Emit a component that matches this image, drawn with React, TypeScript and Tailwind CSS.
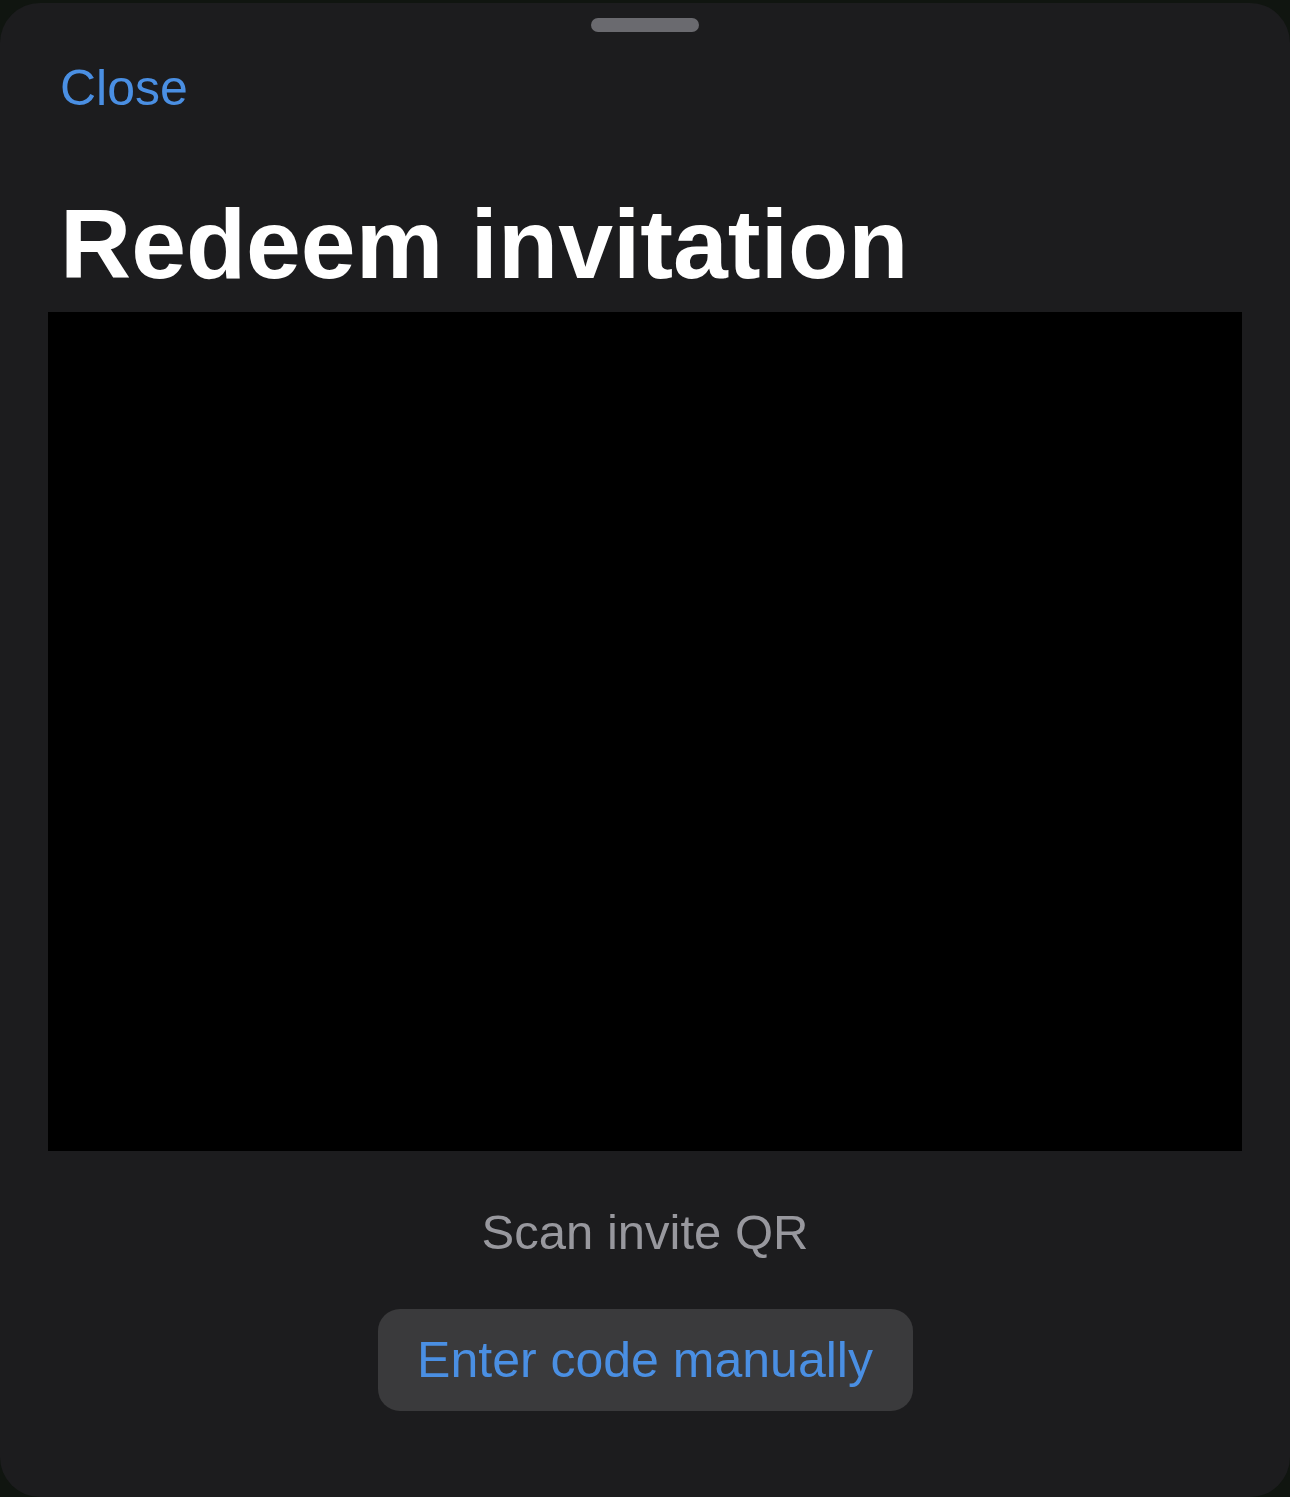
export default function App() {
  return (
    <div className="w-[1290px] h-[1497px] bg-[#101510] pt-[3px] overflow-hidden font-['Liberation_Sans',Arial,sans-serif]">
      {/* Sheet */}
      <div className="h-[1494px] bg-[#1c1c1e] rounded-[40px] flex flex-col">
        {/* Grabber */}
        <div className="mt-[15px] self-center w-[108px] h-[14px] rounded-full bg-[#6a6a6f]" />

        {/* Close */}
        <div className="mt-[31px] pl-[60px]">
          <button className="text-[50px] leading-none h-[50px] text-[#4a8fe3]">Close</button>
        </div>

        {/* Title */}
        <h1 className="mt-[82px] pl-[60px] text-[98.5px] leading-none h-[103px] font-bold text-white">
          Redeem invitation
        </h1>

        {/* Camera preview */}
        <div className="mt-[14px] mx-[48px] h-[839px] bg-black" />

        {/* Hint */}
        <div className="mt-[57px] text-center text-[49px] leading-none h-[49px] text-[#98989e]">
          Scan invite QR
        </div>

        {/* Manual entry */}
        <button className="mt-[52px] self-center w-[535px] h-[102px] rounded-[22px] bg-[#3a3a3c] text-[50px] leading-none text-[#4a8fe3]">
          Enter code manually
        </button>
      </div>
    </div>
  );
}
